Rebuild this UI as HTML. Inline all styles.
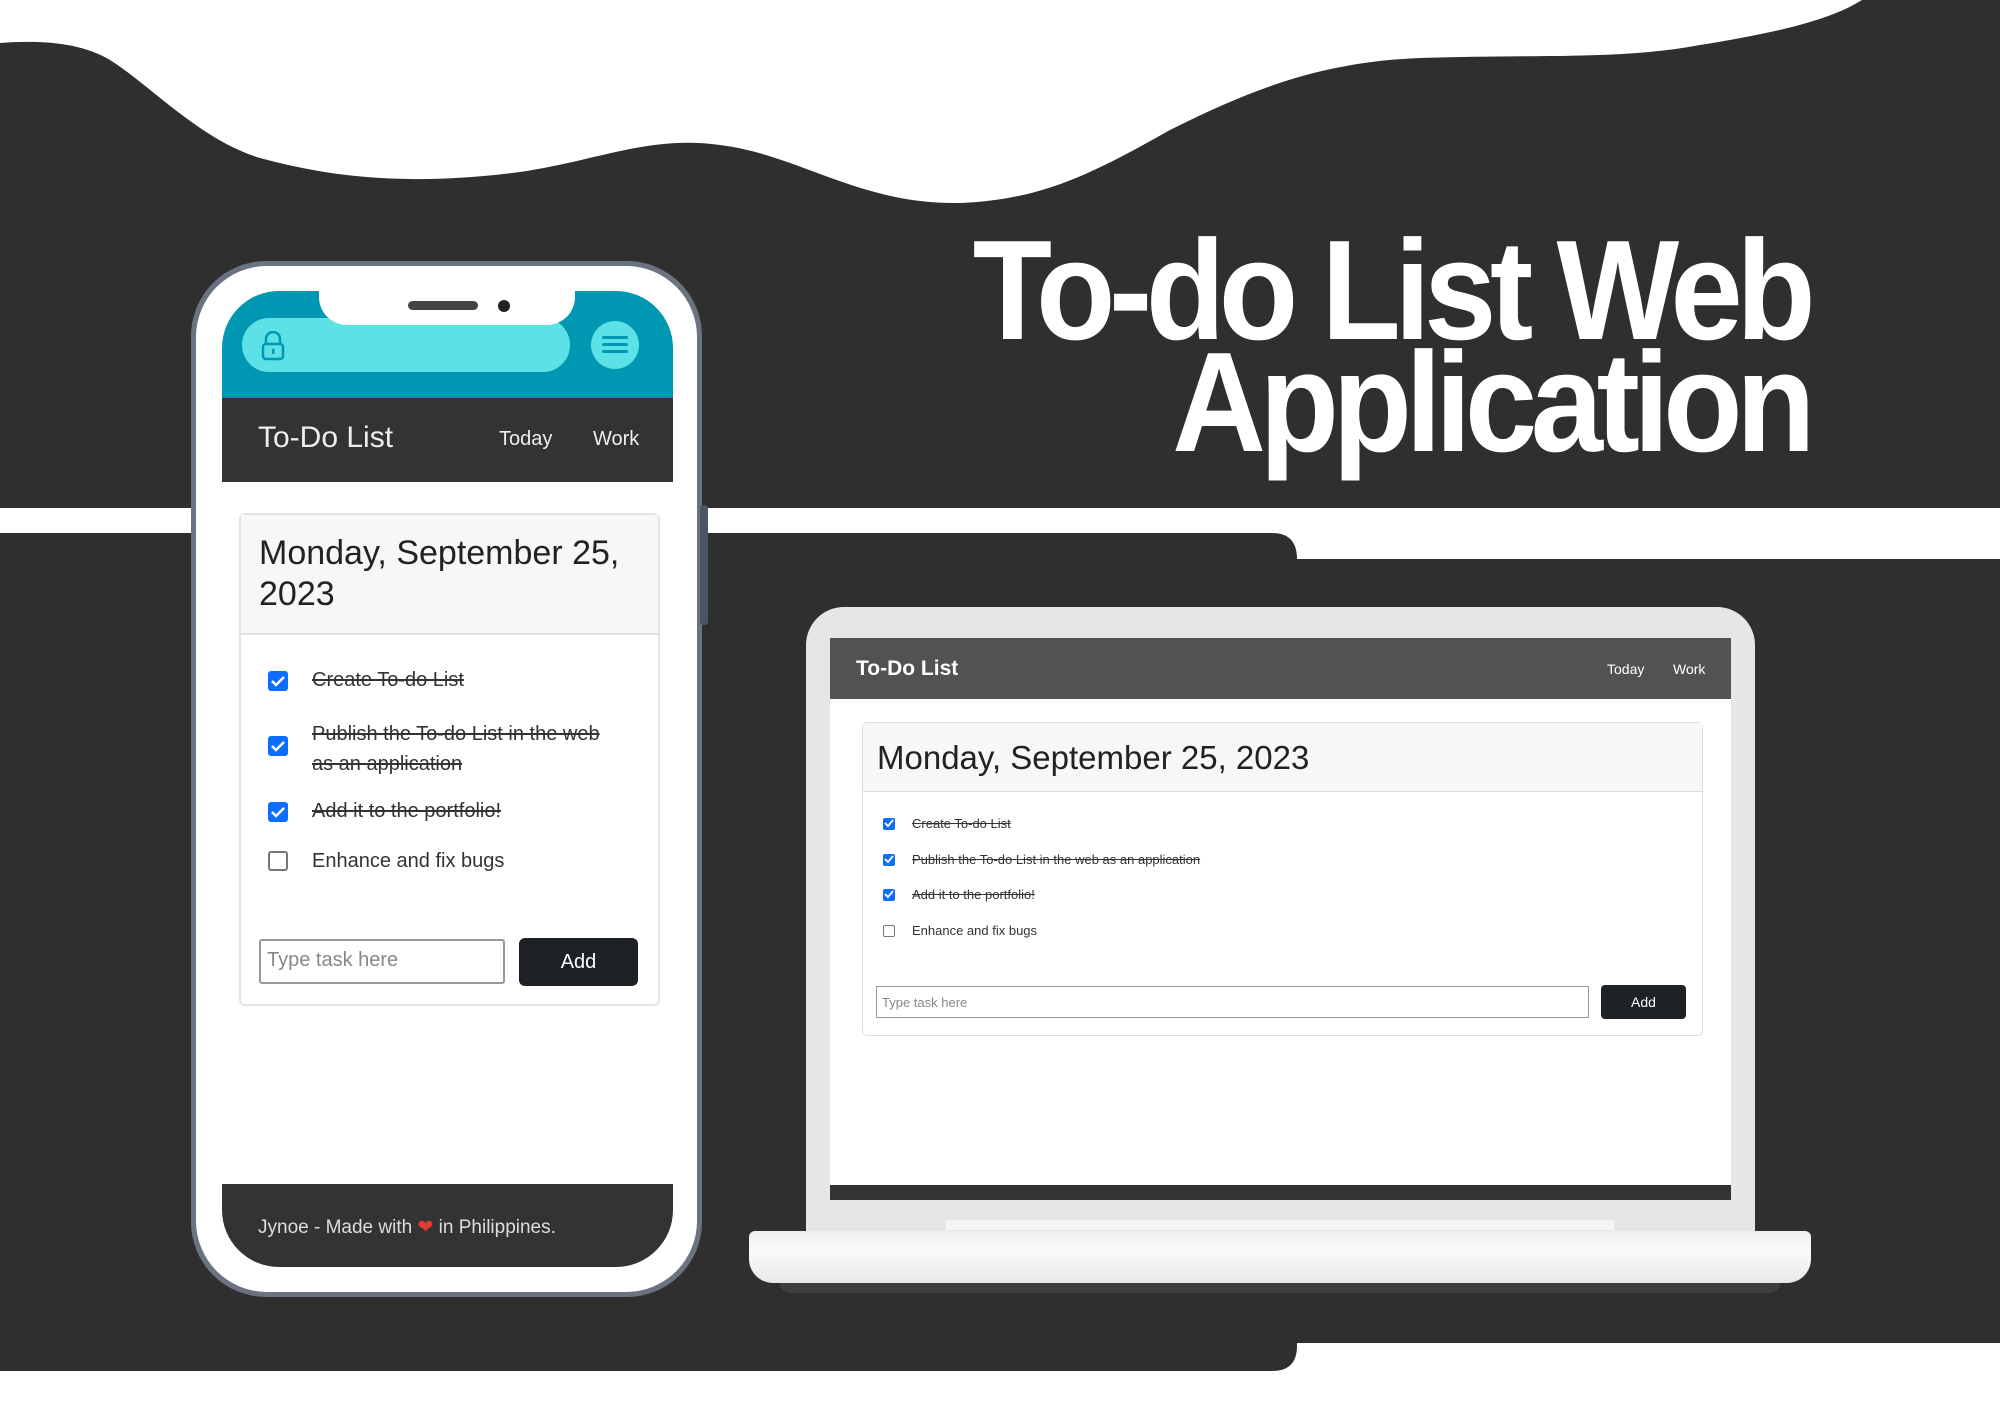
<!DOCTYPE html>
<html><head><meta charset="utf-8"><style>
*{margin:0;padding:0;box-sizing:border-box}
body{width:2000px;height:1414px;position:relative;overflow:hidden;background:#fff;font-family:"Liberation Sans",sans-serif}
.a{position:absolute}
.title{position:absolute;right:191px;color:#fff;font-weight:bold;font-size:142px;letter-spacing:-7px;white-space:nowrap;transform:scaleX(0.915);transform-origin:right top;line-height:1}
.cb{position:absolute;width:20px;height:20px;border-radius:3px;background:#0d6efd}
.cb svg{position:absolute;left:2px;top:3px}
.cbe{position:absolute;width:20px;height:20px;border-radius:3px;border:2px solid #777;background:#fff}
.s{text-decoration:line-through;color:#333}
</style></head><body>
<svg class="a" style="left:0;top:0" width="2000" height="1414">
<path d="M0 43 C40 40 80 42 110 60 C150 85 200 140 260 158 C340 180 420 185 520 172 C600 160 650 135 720 145 C800 155 860 205 960 203 C1040 200 1090 175 1170 130 C1250 90 1320 62 1420 58 C1540 54 1620 60 1700 45 C1780 32 1830 20 1862 0 L2000 0 L2000 508 L0 508 Z" fill="#2f2f2f"/>
<path d="M0 533 L1272 533 Q1297 533 1297 559 L2000 559 L2000 1343 L1297 1343 L1297 1346 Q1297 1371 1272 1371 L0 1371 Z" fill="#2f2f2f"/>
</svg>
<div class="title" style="top:220px">To-do List Web</div>
<div class="title" style="top:332px">Application</div>

<!-- phone -->
<div class="a" style="left:191px;top:261px;width:511px;height:1036px;border-radius:75px;background:#6b7280"></div>
<div class="a" style="left:196px;top:266px;width:501px;height:1026px;border-radius:71px;background:#fff"></div>
<div class="a" style="left:700px;top:505px;width:8px;height:120px;background:#4b5563;border-radius:3px"></div>
<div class="a" style="left:222px;top:291px;width:451px;height:976px;border-radius:57px;overflow:hidden;background:#fff">
  <div class="a" style="left:0;top:0;width:451px;height:107px;background:#0097b2"></div>
  <div class="a" style="left:20px;top:27px;width:328px;height:54px;border-radius:27px;background:#5ce1e6"></div>
  <svg class="a" style="left:38px;top:40px" width="26" height="30" viewBox="0 0 26 30"><path d="M6 13 V8 a7 7 0 0 1 14 0 V13" fill="none" stroke="#0097b2" stroke-width="2.5"/><rect x="3" y="13" width="20" height="15" rx="3" fill="none" stroke="#0097b2" stroke-width="2.5"/><rect x="12" y="18" width="2.5" height="5" fill="#0097b2"/></svg>
  <div class="a" style="left:369px;top:30px;width:48px;height:48px;border-radius:50%;background:#5ce1e6"></div>
  <div class="a" style="left:380px;top:45px;width:26px;height:3px;background:#0097b2;box-shadow:0 7px 0 #0097b2,0 14px 0 #0097b2;border-radius:2px"></div>
  <div class="a" style="left:97px;top:-5px;width:256px;height:39px;background:#fff;border-radius:0 0 28px 28px"></div>
  <div class="a" style="left:186px;top:10px;width:70px;height:9px;border-radius:5px;background:#444"></div>
  <div class="a" style="left:276px;top:9px;width:12px;height:12px;border-radius:50%;background:#222"></div>
  <div class="a" style="left:0;top:107px;width:451px;height:84px;background:#333"></div>
  <div class="a" style="left:36px;top:130px;color:#eee;font-size:30px">To-Do List</div>
  <div class="a" style="left:277px;top:137px;color:#eee;font-size:20px">Today</div>
  <div class="a" style="left:371px;top:137px;color:#eee;font-size:20px">Work</div>
  <div class="a" style="left:17px;top:222px;width:421px;height:493px;border:2px solid #e3e3e3;border-radius:6px"></div>
  <div class="a" style="left:19px;top:224px;width:417px;height:120px;background:#f7f7f7;border-bottom:2px solid #e0e0e0"></div>
  <div class="a" style="left:37px;top:242px;color:#222;font-size:34px;line-height:41px;width:390px">Monday, September 25, 2023</div>
  <div class="cb" style="left:46px;top:380px"><svg width="16" height="14"><path d="M2 7 L6 11 L14 3" fill="none" stroke="#fff" stroke-width="2.5"/></svg></div>
  <div class="a s" style="left:90px;top:378px;font-size:20px">Create To-do List</div>
  <div class="cb" style="left:46px;top:445px"><svg width="16" height="14"><path d="M2 7 L6 11 L14 3" fill="none" stroke="#fff" stroke-width="2.5"/></svg></div>
  <div class="a s" style="left:90px;top:428px;font-size:20px;line-height:30px;width:310px">Publish the To-do List in the web as an application</div>
  <div class="cb" style="left:46px;top:511px"><svg width="16" height="14"><path d="M2 7 L6 11 L14 3" fill="none" stroke="#fff" stroke-width="2.5"/></svg></div>
  <div class="a s" style="left:90px;top:509px;font-size:20px">Add it to the portfolio!</div>
  <div class="cbe" style="left:46px;top:560px"></div>
  <div class="a" style="left:90px;top:559px;font-size:20px;color:#333">Enhance and fix bugs</div>
  <div class="a" style="left:37px;top:648px;width:246px;height:45px;border:2px solid #999;border-radius:3px;color:#888;font-size:20px;padding:8px 6px">Type task here</div>
  <div class="a" style="left:297px;top:647px;width:119px;height:48px;background:#1e2126;border-radius:6px;color:#fff;font-size:20px;text-align:center;line-height:48px">Add</div>
  <div class="a" style="left:0;top:893px;width:451px;height:83px;background:#333"></div>
  <div class="a" style="left:36px;top:925px;color:#ddd;font-size:19px">Jynoe - Made with <span style="color:#e53935">&#10084;</span> in Philippines.</div>
</div>

<!-- laptop -->
<div class="a" style="left:806px;top:607px;width:949px;height:640px;border-radius:38px 38px 0 0;background:#e6e6e6"></div>
<div class="a" style="left:749px;top:1231px;width:1062px;height:52px;background:linear-gradient(#eee,#fafafa 40%,#e8e8e8);border-radius:6px 6px 24px 24px"></div>
<div class="a" style="left:780px;top:1283px;width:1000px;height:10px;background:#4a4a4a;border-radius:0 0 20px 20px;opacity:.6"></div>
<div class="a" style="left:946px;top:1220px;width:668px;height:10px;background:#f5f5f5"></div>
<div class="a" style="left:830px;top:638px;width:901px;height:562px;background:#fff;overflow:hidden">
  <div class="a" style="left:0;top:0;width:901px;height:61px;background:#525252"></div>
  <div class="a" style="left:26px;top:19px;color:#fff;font-size:21px;font-weight:bold">To-Do List</div>
  <div class="a" style="left:777px;top:23px;color:#fff;font-size:14px">Today</div>
  <div class="a" style="left:843px;top:23px;color:#fff;font-size:14px">Work</div>
  <div class="a" style="left:32px;top:84px;width:841px;height:314px;border:1px solid #ddd;border-radius:5px"></div>
  <div class="a" style="left:33px;top:85px;width:839px;height:69px;background:#f7f7f7;border-bottom:1px solid #ddd"></div>
  <div class="a" style="left:47px;top:101px;color:#222;font-size:33px">Monday, September 25, 2023</div>
  <div class="cb" style="left:53px;top:180px;width:12px;height:12px;border-radius:2px"><svg width="10" height="9" style="left:1px;top:1px"><path d="M1 4 L4 7 L9 1" fill="none" stroke="#fff" stroke-width="1.8"/></svg></div>
  <div class="a s" style="left:82px;top:178px;font-size:13px">Create To-do List</div>
  <div class="cb" style="left:53px;top:216px;width:12px;height:12px;border-radius:2px"><svg width="10" height="9" style="left:1px;top:1px"><path d="M1 4 L4 7 L9 1" fill="none" stroke="#fff" stroke-width="1.8"/></svg></div>
  <div class="a s" style="left:82px;top:214px;font-size:13px">Publish the To-do List in the web as an application</div>
  <div class="cb" style="left:53px;top:251px;width:12px;height:12px;border-radius:2px"><svg width="10" height="9" style="left:1px;top:1px"><path d="M1 4 L4 7 L9 1" fill="none" stroke="#fff" stroke-width="1.8"/></svg></div>
  <div class="a s" style="left:82px;top:249px;font-size:13px">Add it to the portfolio!</div>
  <div class="cbe" style="left:53px;top:287px;width:12px;height:12px;border-radius:2px;border-width:1px"></div>
  <div class="a" style="left:82px;top:285px;font-size:13px;color:#333">Enhance and fix bugs</div>
  <div class="a" style="left:46px;top:348px;width:713px;height:32px;border:1px solid #999;color:#888;font-size:13px;padding:8px 5px">Type task here</div>
  <div class="a" style="left:771px;top:347px;width:85px;height:34px;background:#1e2126;border-radius:4px;color:#fff;font-size:14px;text-align:center;line-height:34px">Add</div>
  <div class="a" style="left:0;top:547px;width:901px;height:15px;background:#333"></div>
</div>
</body></html>
